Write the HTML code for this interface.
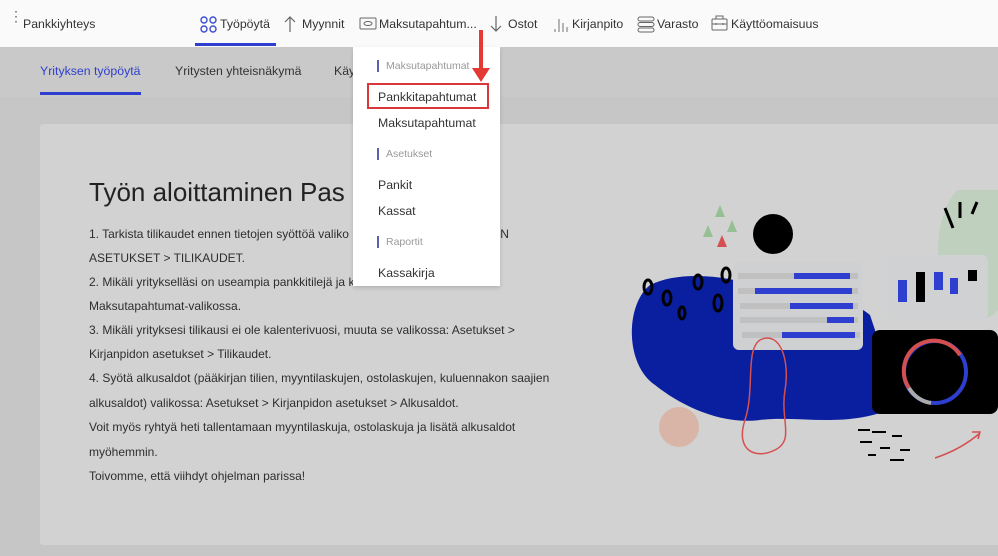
<!DOCTYPE html>
<html><head><meta charset="utf-8"><style>
*{margin:0;padding:0;box-sizing:border-box}
body{width:998px;height:556px;overflow:hidden;background:#c6c6c6;font-family:"Liberation Sans",sans-serif;position:relative;color:#333}
.a{position:absolute;white-space:nowrap}
#top{position:absolute;left:0;top:0;width:998px;height:47px;background:#fafafa}
.nav{font-size:12.3px;color:#333;top:17px}
#sub{position:absolute;left:0;top:47px;width:998px;height:50px;background:#c9c9c9}
#card{position:absolute;left:40px;top:124px;width:970px;height:421px;background:#d2d2d2;border-radius:3px}
.t{font-size:12px;color:#2e2e2e;left:89px}
#menu{position:absolute;left:353px;top:47px;width:147px;height:239px;background:#fff;box-shadow:0 2px 4px rgba(0,0,0,.15)}
.h{font-size:10.5px;color:#999;left:33px}
.hb{position:absolute;left:24px;width:2px;height:12px;background:#5a5fb0}
.m{font-size:12.3px;color:#333;left:25px}
</style></head><body>
<div id="top"></div>
<div class="a" style="left:9px;top:13px;font-size:14px;color:#666;line-height:6px">⋮</div>
<div class="a nav" style="left:23px">Pankkiyhteys</div>
<svg class="a" style="left:200px;top:16px" width="18" height="18"><g fill="none" stroke="#3b4ed0" stroke-width="1.4"><circle cx="4" cy="4" r="3"/><circle cx="13" cy="4" r="3"/><circle cx="4" cy="13" r="3"/><circle cx="13" cy="13" r="3"/></g></svg>
<div class="a nav" style="left:220px">Työpöytä</div>
<div class="a" style="left:195px;top:43px;width:81px;height:3px;background:#2e3fcf"></div>
<svg class="a" style="left:284px;top:15px" width="12" height="18"><path d="M6 17V2M1 7l5-5 5 5" stroke="#666" fill="none" stroke-width="1.2"/></svg>
<div class="a nav" style="left:302px">Myynnit</div>
<svg class="a" style="left:359px;top:17px" width="18" height="13"><rect x="1" y="1" width="16" height="11" rx="1" stroke="#666" fill="none"/><ellipse cx="9" cy="6.5" rx="4" ry="2" stroke="#666" fill="none"/></svg>
<div class="a nav" style="left:379px">Maksutapahtum...</div>
<svg class="a" style="left:490px;top:15px" width="12" height="18"><path d="M6 1v15M1 11l5 5 5-5" stroke="#666" fill="none" stroke-width="1.2"/></svg>
<div class="a nav" style="left:508px">Ostot</div>
<svg class="a" style="left:553px;top:15px" width="16" height="18"><path d="M2 17v-3M6 17V4M10 17V8M14 17v-5" stroke="#888" stroke-width="1.2"/></svg>
<div class="a nav" style="left:572px">Kirjanpito</div>
<svg class="a" style="left:637px;top:16px" width="18" height="17"><g fill="none" stroke="#666"><rect x="1" y="1" width="16" height="4" rx="2"/><rect x="1" y="6.5" width="16" height="4" rx="2"/><rect x="1" y="12" width="16" height="4" rx="2"/></g></svg>
<div class="a nav" style="left:657px">Varasto</div>
<svg class="a" style="left:711px;top:15px" width="17" height="17"><g fill="none" stroke="#666"><rect x="1" y="4" width="15" height="11" rx="1"/><rect x="5" y="1" width="7" height="3"/><path d="M1 9h15M5 8v2M12 8v2"/></g></svg>
<div class="a nav" style="left:731px">Käyttöomaisuus</div>

<div id="sub"></div>
<div class="a" style="left:40px;top:64px;font-size:12.3px;color:#2e3fcf">Yrityksen työpöytä</div>
<div class="a" style="left:40px;top:92px;width:101px;height:3px;background:#2e3fcf"></div>
<div class="a" style="left:175px;top:64px;font-size:12.3px;color:#333">Yritysten yhteisnäkymä</div>
<div class="a" style="left:334px;top:64px;font-size:12.3px;color:#333">Käy</div>

<div id="card"></div>
<div class="a" style="left:89px;top:177px;font-size:26px;color:#222">Työn aloittaminen Pas</div>
<div class="a t" style="top:227px">1. Tarkista tilikaudet ennen tietojen syöttöä valiko<span style="margin-left:130px">IDON</span></div>
<div class="a t" style="top:251px">ASETUKSET &gt; TILIKAUDET.</div>
<div class="a t" style="top:275px">2. Mikäli yritykselläsi on useampia pankkitilejä ja k</div>
<div class="a t" style="top:299px">Maksutapahtumat-valikossa.</div>
<div class="a t" style="top:323px">3. Mikäli yrityksesi tilikausi ei ole kalenterivuosi, muuta se valikossa: Asetukset &gt;</div>
<div class="a t" style="top:347px">Kirjanpidon asetukset &gt; Tilikaudet.</div>
<div class="a t" style="top:371px">4. Syötä alkusaldot (pääkirjan tilien, myyntilaskujen, ostolaskujen, kuluennakon saajien</div>
<div class="a t" style="top:396px">alkusaldot) valikossa: Asetukset &gt; Kirjanpidon asetukset &gt; Alkusaldot.</div>
<div class="a t" style="top:420px">Voit myös ryhtyä heti tallentamaan myyntilaskuja, ostolaskuja ja lisätä alkusaldot</div>
<div class="a t" style="top:445px">myöhemmin.</div>
<div class="a t" style="top:469px">Toivomme, että viihdyt ohjelman parissa!</div>

<svg class="a" style="left:600px;top:190px" width="398" height="280">
<ellipse cx="378" cy="60" rx="40" ry="70" fill="#bfd0bf"/>
<path d="M50 95 C80 80 130 85 170 100 C210 115 240 100 270 125 L300 215 C250 240 200 225 160 230 C120 235 80 215 55 195 C25 175 25 115 50 95Z" fill="#0a1fa0"/>
<circle cx="79" cy="237" r="20" fill="#d9b5a8"/>
<circle cx="173" cy="44" r="20" fill="#000"/>
<path d="M120 15l5 12h-10zM108 35l5 12h-10zM132 30l5 12h-10z" fill="#94c094"/><path d="M122 45l5 12h-10z" fill="#d45050"/>
<rect x="133" y="72" width="130" height="88" rx="6" fill="#cfd0d2"/>
<g fill="#c0c0c0"><rect x="138" y="83" width="120" height="6"/><rect x="138" y="98" width="120" height="6"/><rect x="140" y="113" width="118" height="6"/><rect x="140" y="127" width="118" height="6"/><rect x="142" y="142" width="118" height="6"/></g>
<g fill="#2e3fcf"><rect x="194" y="83" width="56" height="6"/><rect x="155" y="98" width="97" height="6"/><rect x="190" y="113" width="63" height="6"/><rect x="227" y="127" width="27" height="6"/><rect x="182" y="142" width="73" height="6"/></g>
<path d="M160 150c20-10 30 20 25 50s10 50-10 60-40 0-30-30 0-70 15-80z" fill="none" stroke="#d45050" stroke-width="1.5"/>
<rect x="288" y="65" width="100" height="65" rx="6" fill="#d0d1d3"/>
<rect x="298" y="90" width="9" height="22" fill="#2e3fcf"/><rect x="316" y="82" width="9" height="30" fill="#000"/><rect x="334" y="82" width="9" height="18" fill="#2e3fcf"/><rect x="350" y="88" width="8" height="16" fill="#2e3fcf"/><rect x="368" y="80" width="9" height="11" fill="#000"/>
<rect x="272" y="140" width="126" height="84" rx="8" fill="#000"/>
<circle cx="335" cy="182" r="31" fill="none" stroke="#2e3fcf" stroke-width="4"/>
<path d="M309 198a31 31 0 0 1 6-41a31 31 0 0 1 45 8" fill="none" stroke="#d45050" stroke-width="4"/>
<path d="M309 198a31 31 0 0 0 22 15" fill="none" stroke="#aaa" stroke-width="4"/>
<g fill="none" stroke="#000" stroke-width="3"><ellipse cx="48" cy="97" rx="4" ry="7"/><ellipse cx="67" cy="108" rx="4" ry="7"/><ellipse cx="98" cy="92" rx="4" ry="7"/><ellipse cx="126" cy="85" rx="4" ry="7"/><ellipse cx="118" cy="113" rx="4" ry="8"/><ellipse cx="82" cy="123" rx="3" ry="6"/><path d="M345 18l8 20M360 12v16M377 12l-5 12"/></g>
<path d="M335 268c15-5 30-12 45-25M372 242l8 0-2 7" fill="none" stroke="#d45050" stroke-width="1.5"/>
<g stroke="#000" stroke-width="2"><path d="M258 240h12M272 242h14M292 246h10M260 252h12M280 258h10M300 260h10M268 265h8M290 270h14"/></g>
</svg>

<div id="menu">
<div class="hb" style="top:13px"></div><div class="a h" style="top:13px">Maksutapahtumat</div>
<div class="a" style="left:14px;top:36px;width:122px;height:26px;border:2px solid #d9383a"></div>
<div class="a m" style="top:43px">Pankkitapahtumat</div>
<div class="a m" style="top:69px">Maksutapahtumat</div>
<div class="hb" style="top:101px"></div><div class="a h" style="top:101px">Asetukset</div>
<div class="a m" style="top:131px">Pankit</div>
<div class="a m" style="top:157px">Kassat</div>
<div class="hb" style="top:189px"></div><div class="a h" style="top:189px">Raportit</div>
<div class="a m" style="top:219px">Kassakirja</div>
</div>
<svg class="a" style="left:470px;top:28px" width="22" height="60"><path d="M11 2v40" stroke="#e53935" stroke-width="4"/><path d="M2 40l9 14 9-14z" fill="#e53935"/></svg>
</body></html>
